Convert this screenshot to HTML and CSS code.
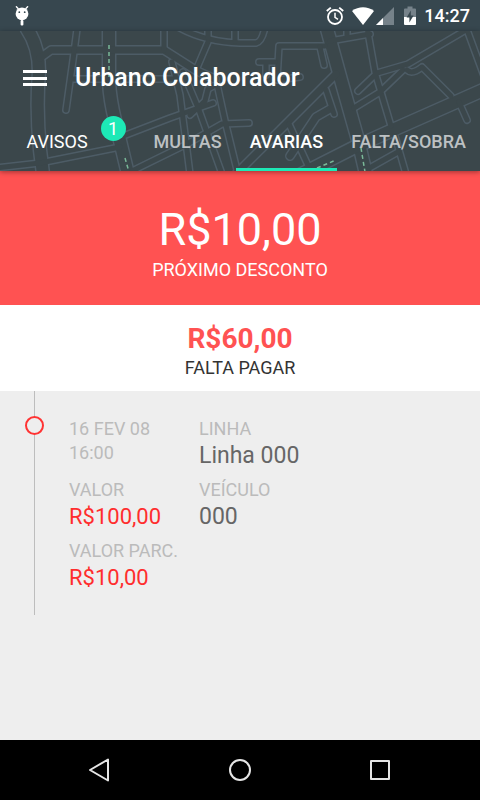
FILE: index.html
```html
<!DOCTYPE html>
<html lang="pt-BR">
<head>
  <meta charset="utf-8">
  <meta name="viewport" content="width=device-width, initial-scale=1">
  <title>Urbano Colaborador</title>
  <link rel="stylesheet" href="styles.css">
</head>
<body>
  <div class="status-bar">
    <svg class="debug-icon" width="16" height="20" viewBox="0 0 16 20" fill="#fff">
      <path d="M2 0.3L4.5 3M14 0.3L11.5 3" stroke="#fff" stroke-width="1.4"/>
      <circle cx="8" cy="7.8" r="6.4"/>
      <rect x="6.6" y="14" width="2.8" height="5.5" rx="1"/>
      <circle cx="5.3" cy="6.2" r="0.9" fill="#37474f"/>
      <circle cx="10.7" cy="6.2" r="0.9" fill="#37474f"/>
    </svg>
    <div class="status-icons">
      <svg width="18" height="20" viewBox="0 0 18 20" fill="none" stroke="#fff">
        <circle cx="9" cy="11" r="7" stroke-width="1.8"/>
        <path d="M9 6.8V11.4L12 13.4" stroke-width="1.5"/>
        <path d="M0.8 5L4.8 1.6M17.2 5L13.2 1.6" stroke-width="1.9"/>
      </svg>
      <svg class="wifi" width="22" height="20" viewBox="0 0 22 20" fill="#fff">
        <path d="M0 5C6.5 0 15.5 0 22 5L11 19Z"/>
      </svg>
      <svg class="signal" width="18" height="20" viewBox="0 0 18 20">
        <path d="M18 1V19H0Z" fill="#76828a"/>
        <path d="M7 12V19H0Z" fill="#fff"/>
      </svg>
      <svg class="battery" width="12" height="20" viewBox="0 0 12 20">
        <path d="M3.5 0.5H8.5V2.5H11Q12 2.5 12 3.5V11H0V3.5Q0 2.5 1 2.5H3.5Z" fill="#76828a"/>
        <path d="M0 11H12V18Q12 19 11 19H1Q0 19 0 18Z" fill="#fff"/>
        <path d="M6.8 4.5L2.6 11.5H5.4V16.5L9.6 9.5H6.8Z" fill="#37474f"/>
      </svg>
    </div>
    <time class="clock">14:27</time>
  </div>

  <header class="app-header">
    <svg class="map" viewBox="0 31 480 140" preserveAspectRatio="xMinYMin slice" aria-hidden="true">
      <defs>
        <g id="roads">
          <path class="wide" d="M27 29C36 42 39 55 39 72C37 95 37 120 40 150L43 174"/>
          <path class="wide" d="M109 29V82Q110 100 115 120L128 174"/>
          <path class="wide" d="M327 29L341 80L358 140L366 174"/>
          <path class="wide" d="M490 87L395 129L355 147L290 180"/>
          <path class="mid" d="M40 58L51 50H164L197 71L215 79"/>
          <path class="mid" d="M336 74L289 121L236 174"/>
          <path class="mid" d="M330 109L316 117L290 156"/>
          <path d="M77 29L73 60L66 110"/>
          <path d="M73 79H103M115 79H180"/>
          <path d="M-4 168L40 163L120 147"/>
          <path d="M118 138L170 118L213 103"/>
          <path d="M132 171L187 144L222 124L249 123"/>
          <path d="M178 27Q205 42 240 43H256Q262 42 265 27"/>
          <path d="M208 27V38M235 27V41M164 27V50"/>
          <path d="M208 42L196 70"/>
          <path d="M172 62L180 95L190 174"/>
          <path d="M183 72L199 110L222 174"/>
          <path d="M217 84L226 125L238 174"/>
          <path d="M190 115L205 101L208 89L217 84"/>
          <path d="M325 46H279L277 80L300 77"/>
          <path d="M259 62H275M266 63V75"/>
          <path d="M320 47L324 65"/>
          <path d="M330 41L370 34M347 27V38"/>
          <path d="M367 27L375 72L391 126M395 136L406 174"/>
          <path d="M476 24L408 64L377 73L358 91"/>
          <path d="M403 70L380 92L354 108"/>
          <path d="M407 70Q412 75 422 67L451 96"/>
          <path d="M466 27L484 76"/>
          <path d="M459 102L467 120"/>
          <path d="M326 90L334 114"/>
          <path d="M289 124L312 174"/>
          <path d="M366 170L398 152"/>
        </g>
      </defs>
      <use href="#roads" class="road-edge"/>
      <use href="#roads" class="road-fill"/>
      <path class="route" d="M109 45V78M125 158L129 172M317 168L336 160M361 148L365 172"/>
    </svg>
    <div class="toolbar">
      <button class="menu-btn" type="button" aria-label="Menu">
        <svg width="24" height="18" viewBox="0 0 24 18" fill="#fff">
          <path d="M0 1H24V4H0ZM0 8H24V11H0ZM0 14H24V17H0Z"/>
        </svg>
      </button>
      <h1>Urbano Colaborador</h1>
    </div>
    <nav class="tabs">
      <button class="tab tab-new" type="button">AVISOS <span class="badge">1</span></button>
      <button class="tab" type="button">MULTAS</button>
      <button class="tab tab-active" type="button">AVARIAS</button>
      <button class="tab" type="button">FALTA/SOBRA</button>
    </nav>
  </header>

  <main>
    <section class="next-discount">
      <p class="amount">R$10,00</p>
      <p class="caption">PRÓXIMO DESCONTO</p>
    </section>
    <section class="remaining">
      <p class="amount">R$60,00</p>
      <p class="caption">FALTA PAGAR</p>
    </section>
    <section class="timeline">
      <div class="track"><span class="dot"></span></div>
      <div class="entry">
        <div class="label date">16 FEV 08<br>16:00</div>
        <div>
          <div class="label">LINHA</div>
          <div class="value">Linha 000</div>
        </div>
        <div>
          <div class="label">VALOR</div>
          <div class="value money">R$100,00</div>
        </div>
        <div>
          <div class="label">VEÍCULO</div>
          <div class="value">000</div>
        </div>
        <div>
          <div class="label">VALOR PARC.</div>
          <div class="value money">R$10,00</div>
        </div>
      </div>
    </section>
  </main>

  <footer class="nav-bar">
    <button type="button" aria-label="Voltar">
      <svg width="24" height="26" viewBox="0 0 24 26"><path d="M2 13L20 2.5V23.5Z"/></svg>
    </button>
    <button type="button" aria-label="Início">
      <svg width="24" height="26" viewBox="0 0 24 26"><circle cx="12" cy="13" r="10"/></svg>
    </button>
    <button type="button" aria-label="Recentes">
      <svg width="24" height="26" viewBox="0 0 24 26"><rect x="3" y="4" width="18" height="18"/></svg>
    </button>
  </footer>
</body>
</html>
```

FILE: styles.css
```css
* {
  box-sizing: border-box;
}

body {
  margin: 0;
  min-height: 100vh;
  display: flex;
  flex-direction: column;
  font-family: Roboto, sans-serif;
  background-color: #eee;
}

h1,
p {
  margin: 0;
}

button {
  padding: 0;
  border: none;
  background: none;
  font-family: inherit;
  cursor: pointer;
}

svg {
  display: block;
}

/* Status bar */
.status-bar {
  display: flex;
  align-items: center;
  height: 31px;
  padding: 0 10px 0 14px;
  background-color: #37474f;
  color: #fff;
}

.status-icons {
  display: flex;
  margin-left: auto;
}

.wifi {
  margin-left: 8px;
}

.signal {
  margin-left: 2px;
}

.battery {
  margin-left: 10px;
}

.clock {
  margin-left: 8px;
  font-size: 18px;
  font-weight: 500;
  line-height: 31px;
}

/* Header */
.app-header {
  position: relative;
  z-index: 1;
  display: flex;
  flex-direction: column;
  background-color: #3b474b;
  box-shadow: 0 1px 5px rgba(0, 0, 0, 0.4);
}

.map {
  position: absolute;
  top: 0;
  left: 0;
  width: 100%;
  height: 100%;
  fill: none;
}

.road-edge {
  --edge: 2px;
  stroke: #4d5c66;
}

.road-fill {
  --edge: -1px;
  stroke: #3b474b;
}

#roads path {
  stroke-width: calc(6px + var(--edge));
  stroke-linecap: round;
  stroke-linejoin: round;
}

#roads .mid {
  stroke-width: calc(8px + var(--edge));
}

#roads .wide {
  stroke-width: calc(13px + var(--edge));
}

.route {
  stroke: #7ab898;
  stroke-width: 1.5;
  stroke-dasharray: 4 3;
}

.toolbar {
  position: relative;
  display: flex;
  align-items: center;
  height: 82px;
  padding: 12px 23px 0;
}

.menu-btn {
  margin-right: 28px;
}

h1 {
  color: #fff;
  font-size: 25px;
  font-weight: 500;
  line-height: 30px;
}

.tabs {
  position: relative;
  display: flex;
  justify-content: flex-end;
  height: 58px;
}

.tab {
  display: flex;
  padding: 0 14px;
  border-bottom: 3px solid transparent;
  color: #bdc1c3;
  font-size: 18px;
  font-weight: 500;
  line-height: 58px;
}

.tab-new {
  color: #fff;
  font-weight: 400;
}

.tab-active {
  color: #fff;
  border-bottom-color: #1de9b6;
}

.badge {
  width: 25px;
  height: 25px;
  margin: 3px 0 0 13px;
  border-radius: 50%;
  background-color: #1de9b6;
  line-height: 25px;
}

/* Totals */
main {
  flex: 1;
}

.next-discount,
.remaining {
  text-align: center;
}

.next-discount {
  padding: 31px 0 23px;
  background-color: #ff5252;
  color: #fff;
}

.next-discount .amount {
  font-size: 45px;
  line-height: 56px;
}

.caption {
  font-size: 18px;
  line-height: 24px;
}

.remaining {
  padding: 17px 0 11px;
  background-color: #fff;
  color: #333;
}

.remaining .amount {
  color: #ff5252;
  font-size: 28px;
  font-weight: 700;
  line-height: 34px;
}

/* Timeline */
.timeline {
  display: flex;
  padding-right: 24px;
}

.track {
  width: 69px;
  padding: 25px 0 0 25px;
  background: linear-gradient(#bdbdbd, #bdbdbd) 34px 0 / 1px 100% no-repeat;
}

.dot {
  display: block;
  width: 19px;
  height: 19px;
  border: 2px solid #ff3333;
  border-radius: 50%;
  background-color: #eee;
}

.entry {
  flex: 1;
  display: grid;
  grid-template-columns: 130px 1fr;
  row-gap: 7px;
  padding: 26px 0 22px;
}

.label {
  color: #bbb;
  font-size: 18px;
  line-height: 24px;
}

.value {
  color: #666;
  font-size: 23px;
  line-height: 30px;
}

.money {
  color: #ff2d2d;
  font-size: 22px;
}

/* Android navigation */
.nav-bar {
  display: flex;
  justify-content: center;
  gap: 116px;
  height: 60px;
  background-color: #000;
}

.nav-bar svg {
  fill: none;
  stroke: #e6e6e6;
  stroke-width: 2;
  stroke-linejoin: round;
}
```
